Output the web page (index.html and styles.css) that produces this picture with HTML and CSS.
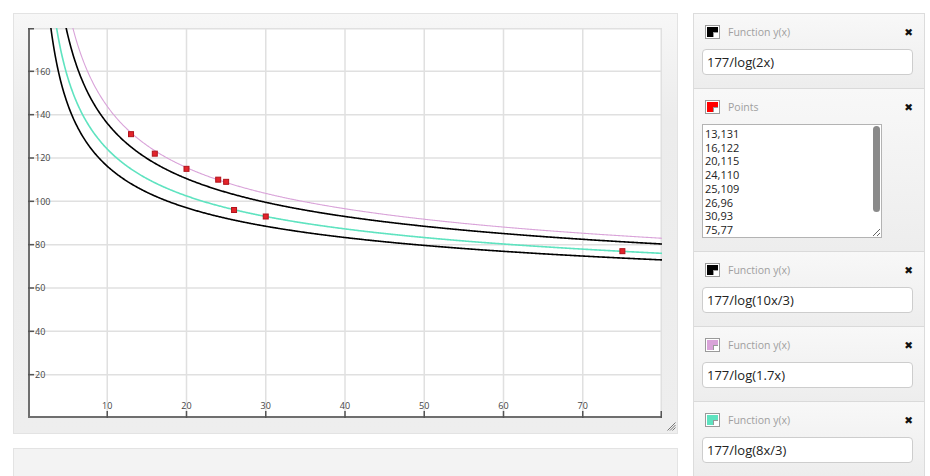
FILE: index.html
```html
<!DOCTYPE html>
<html lang="en">
<head>
    <meta charset="UTF-8">
    <meta name="viewport" content="width=device-width, initial-scale=1.0">
    <title>Function Plotter</title>
    <link rel="stylesheet" href="styles.css">
</head>
<body>
    <div class="main">
        <div class="graph-panel">
            <svg id="plot" class="plot" width="634" height="390"></svg>
            <svg class="grip" width="9" height="9" viewBox="0 0 9 9">
                <line x1="8.5" y1="0.5" x2="0.5" y2="8.5"/>
                <line x1="8.5" y1="3" x2="3" y2="8.5"/>
                <line x1="8.5" y1="5.5" x2="5.5" y2="8.5"/>
            </svg>
        </div>
        <div class="console-panel"></div>
    </div>

    <div class="sidebar">
        <div class="series" data-kind="function">
            <div class="series-head">
                <span class="swatch"><i class="black"></i></span>
                <span class="series-title">Function y(x)</span>
                <span class="close">&#10006;</span>
            </div>
            <input type="text" class="expr" value="177/log(2x)">
        </div>

        <div class="series" data-kind="points">
            <div class="series-head">
                <span class="swatch"><i class="red"></i></span>
                <span class="series-title">Points</span>
                <span class="close">&#10006;</span>
            </div>
            <div class="points-box">
                <textarea class="points" spellcheck="false">13,131
16,122
20,115
24,110
25,109
26,96
30,93
75,77
</textarea>
                <span class="scroll-thumb"></span>
            </div>
        </div>

        <div class="series" data-kind="function">
            <div class="series-head">
                <span class="swatch"><i class="black"></i></span>
                <span class="series-title">Function y(x)</span>
                <span class="close">&#10006;</span>
            </div>
            <input type="text" class="expr" value="177/log(10x/3)">
        </div>

        <div class="series" data-kind="function">
            <div class="series-head">
                <span class="swatch"><i class="plum"></i></span>
                <span class="series-title">Function y(x)</span>
                <span class="close">&#10006;</span>
            </div>
            <input type="text" class="expr" value="177/log(1.7x)">
        </div>

        <div class="series" data-kind="function">
            <div class="series-head">
                <span class="swatch"><i class="aqua"></i></span>
                <span class="series-title">Function y(x)</span>
                <span class="close">&#10006;</span>
            </div>
            <input type="text" class="expr" value="177/log(8x/3)">
        </div>
    </div>

    <script src="script.js"></script>
</body>
</html>
```

FILE: styles.css
```css
/* Reset */
* {
    margin: 0;
    padding: 0;
    box-sizing: border-box;
}

body {
    display: flex;
    align-items: flex-start;
    gap: 15px;
    height: 476px;
    overflow: hidden;
    padding: 13px 0 0 13px;
    font-family: "Open Sans", "Noto Sans", sans-serif;
    background: #fff;
    color: #222;
}

/* Left column: graph and console */
.main {
    display: flex;
    flex-direction: column;
    gap: 14px;
    width: 665px;
}

.graph-panel {
    position: relative;
    height: 421px;
    padding: 14px 15px 15px 14px;
    border: 1px solid #e3e3e3;
    background: linear-gradient(#f7f7f7, #ececec 25%, #eeeeee);
}

.plot {
    display: block;
    background: #fff;
    overflow: visible;
}

.plot .grid {
    stroke: #e0e0e0;
    stroke-width: 1.5;
}

.plot .axis {
    stroke: #6e6e6e;
    stroke-width: 2;
}

.plot .tick {
    stroke: #555;
    stroke-width: 1.5;
}

.plot .label {
    font-family: "Open Sans", sans-serif;
    font-size: 9px;
    fill: #444;
}

.plot .curve {
    fill: none;
    stroke-width: 1.6;
    stroke-linejoin: round;
}

.plot .curve.thin {
    stroke-width: 1.1;
}

.plot .point {
    stroke: #b0141c;
    stroke-width: 1;
}

/* Resize handle in the corner */
.grip {
    position: absolute;
    right: 1px;
    bottom: 2px;
}

.grip line {
    stroke: #777;
    stroke-width: 1;
}

.console-panel {
    height: 60px;
    border: 1px solid #e3e3e3;
    background: #f3f3f3;
}

/* Right column: series list */
.sidebar {
    width: 232px;
    border: 1px solid #dcdcdc;
    border-bottom: none;
}

.series {
    padding: 11px 11px 13px 8px;
    border-bottom: 1px solid #dadada;
    background: linear-gradient(#f8f8f8, #ededed);
}

.series-head {
    display: flex;
    align-items: center;
    height: 14px;
    margin-bottom: 10px;
    padding-left: 3px;
}

.swatch {
    position: relative;
    width: 15px;
    height: 14px;
    padding: 1px;
    border: 1px solid #9a9a9a;
    background: #fff;
}

.swatch i {
    display: block;
    width: 100%;
    height: 100%;
}

/* little picker corner */
.swatch::after {
    content: "";
    position: absolute;
    right: 1px;
    bottom: 1px;
    width: 4px;
    height: 4px;
    background: #fff;
    border-left: 1px solid #999;
    border-top: 1px solid #999;
}

.swatch .black { background: #000; }
.swatch .red { background: #f00; }
.swatch .plum { background: #d9a3d9; }
.swatch .aqua { background: #5fe3c0; }

.series-title {
    margin-left: 8px;
    font-size: 10.5px;
    color: #a0a0a0;
}

.close {
    margin-left: auto;
    margin-right: 0;
    font-family: "DejaVu Sans", sans-serif;
    font-size: 10.5px;
    color: #111;
    cursor: pointer;
}

.expr {
    display: block;
    width: 100%;
    height: 26px;
    padding: 0 4px;
    border: 1px solid #cdcdcd;
    border-radius: 4px;
    font-family: "Open Sans", sans-serif;
    font-size: 13px;
    color: #222;
    background: #fff;
    outline: none;
}

.points-box {
    position: relative;
    width: 180px;
}

.points {
    display: block;
    width: 180px;
    height: 114px;
    padding: 2px 12px 2px 2px;
    border: 1px solid #b3b3b3;
    font-family: "Open Sans", sans-serif;
    font-size: 11px;
    line-height: 13.7px;
    color: #222;
    background: #fff;
    overflow: hidden;
    resize: both;
    outline: none;
}

/* scrollbar thumb drawn over the textarea edge */
.scroll-thumb {
    position: absolute;
    top: 2px;
    right: 2px;
    width: 7px;
    height: 86px;
    border-radius: 4px;
    background: #8a8a8a;
}
```

FILE: script.js
```js
// Plot range and size
const W = 634, H = 390;
const X_MAX = 80, Y_MAX = 180;
const NS = 'http://www.w3.org/2000/svg';
const svg = document.getElementById('plot');

function sx(x) { return x * W / X_MAX; }
function sy(y) { return H - y * H / Y_MAX; }

function el(name, attrs, parent) {
    const node = document.createElementNS(NS, name);
    for (const k in attrs) node.setAttribute(k, attrs[k]);
    (parent || svg).appendChild(node);
    return node;
}

// "177/log(2x)" -> x => 177 / Math.log10(2 * x)
function compile(expr) {
    const body = expr
        .replace(/(\d)\s*x/g, '$1*x')
        .replace(/log/g, 'Math.log10');
    return new Function('x', 'return ' + body + ';');
}

function drawGrid() {
    for (let x = 10; x <= X_MAX; x += 10) {
        const px = Math.min(sx(x), W - 0.75);
        el('line', { x1: px, y1: 0, x2: px, y2: H, class: 'grid' });
    }
    for (let y = 20; y <= Y_MAX; y += 20) {
        const py = Math.max(sy(y), 0.75);
        el('line', { x1: 0, y1: py, x2: W, y2: py, class: 'grid' });
    }
}

function drawAxes() {
    el('line', { x1: 1, y1: 0, x2: 1, y2: H, class: 'axis' });
    el('line', { x1: 0, y1: H - 1, x2: W, y2: H - 1, class: 'axis' });

    for (let y = 20; y <= Y_MAX; y += 20) {
        const py = Math.max(sy(y), 0.75);
        el('line', { x1: 0, y1: py, x2: 6, y2: py, class: 'tick' });
        if (y < Y_MAX) {
            const t = el('text', { x: 7, y: py + 3.3, class: 'label' });
            t.textContent = y;
        }
    }
    for (let x = 10; x <= X_MAX; x += 10) {
        const px = Math.min(sx(x), W - 0.75);
        el('line', { x1: px, y1: H - 7, x2: px, y2: H, class: 'tick' });
        if (x < X_MAX) {
            const t = el('text', { x: px, y: H - 9.5, class: 'label', 'text-anchor': 'middle' });
            t.textContent = x;
        }
    }
}

function curvePath(fn) {
    let d = '';
    let pen = false;
    for (let x = 0.02; x <= X_MAX + 0.1; x += 0.1) {
        const y = fn(x);
        if (!isFinite(y) || y < -5 || y > Y_MAX * 1.3) {
            pen = false;
            continue;
        }
        d += (pen ? 'L' : 'M') + sx(x).toFixed(2) + ' ' + sy(y).toFixed(2);
        pen = true;
    }
    return d;
}

function colorOf(panel) {
    return getComputedStyle(panel.querySelector('.swatch i')).backgroundColor;
}

function render() {
    svg.innerHTML = '';
    const clip = el('clipPath', { id: 'plot-clip' });
    el('rect', { x: 0, y: 0, width: W, height: H }, clip);

    drawGrid();

    const curves = el('g', { 'clip-path': 'url(#plot-clip)' });
    const marks = [];

    document.querySelectorAll('.series').forEach(panel => {
        const swatch = panel.querySelector('.swatch i');
        const color = colorOf(panel);
        if (panel.dataset.kind === 'function') {
            const fn = compile(panel.querySelector('.expr').value);
            const cls = swatch.classList.contains('plum') ? 'curve thin' : 'curve';
            el('path', { d: curvePath(fn), stroke: color, class: cls }, curves);
        } else {
            panel.querySelector('.points').value.split('\n').forEach(line => {
                const [x, y] = line.split(',').map(Number);
                if (line.trim() && isFinite(x) && isFinite(y)) marks.push({ x, y });
            });
        }
    });

    drawAxes();

    marks.forEach(p => {
        el('rect', {
            x: sx(p.x) - 2.5, y: sy(p.y) - 2.5,
            width: 5, height: 5,
            fill: '#e3242b', class: 'point'
        });
    });
}

document.querySelectorAll('.expr, .points').forEach(f => f.addEventListener('input', render));
render();
```
